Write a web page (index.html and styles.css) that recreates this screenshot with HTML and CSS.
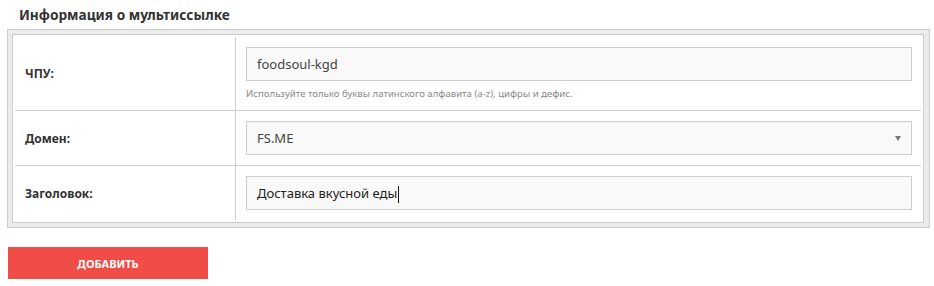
FILE: index.html
```html
<!DOCTYPE html>
<html lang="ru">
<head>
<meta charset="utf-8">
<title>Информация о мультиссылке</title>
<link rel="stylesheet" href="styles.css">
</head>
<body>
<h2 class="title">Информация о мультиссылке</h2>
<div class="panel">
  <div class="panel-inner">
    <div class="form-table">
      <div class="row first">
        <div class="label">ЧПУ:</div>
        <div class="field">
          <div class="input">foodsoul-kgd</div>
          <div class="hint">Используйте только буквы латинского алфавита (a-z), цифры и дефис.</div>
        </div>
      </div>
      <div class="row">
        <div class="label">Домен:</div>
        <div class="field">
          <div class="input select">FS.ME<span class="arrow"></span></div>
        </div>
      </div>
      <div class="row last">
        <div class="label">Заголовок:</div>
        <div class="field">
          <div class="input dark">Доставка вкусной еды<span class="caret"></span></div>
        </div>
      </div>
    </div>
  </div>
</div>
<button class="btn">ДОБАВИТЬ</button>
</body>
</html>
```
FILE: styles.css
```css
html, body {
  margin: 0;
  padding: 0;
  background: #fff;
}
body {
  padding: 0 5px 0 7px;
  font-family: "Noto Sans", "Open Sans", sans-serif;
  color: #333;
}
.title {
  margin: 0 0 4px 12px;
  padding-top: 5px;
  font-size: 13.7px;
  line-height: 20px;
  font-weight: 700;
  color: #333;
}
.panel {
  width: 912px;
  border: 1px solid #cdcdcd;
  background: #ebebeb;
  padding: 4px 5px 4px 4px;
}
.panel-inner {
  border: 1px solid #cdcdcd;
  background: #fff;
  padding: 2px;
}
.form-table {
  display: flex;
  flex-direction: column;
}
.row {
  display: grid;
  grid-template-columns: 221px 1fr;
  border-bottom: 1px solid #cdcdcd;
}
.row.last {
  border-bottom: none;
}
.label {
  border-right: 1px solid #cdcdcd;
  display: flex;
  align-items: center;
  padding-left: 10px;
  font-size: 12px;
  font-weight: 700;
  color: #333;
}
.field {
  padding: 10px 9px 10px 10px;
}
.row.first .field {
  padding-bottom: 9px;
}
.input {
  position: relative;
  height: 32px;
  border: 1px solid #cdcdcd;
  background: #f9f9f9;
  padding-left: 10px;
  font-size: 13px;
  line-height: 32px;
  color: #444;
}
.input.dark {
  color: #222;
}
.hint {
  margin-top: 6px;
  font-size: 9.6px;
  line-height: 14px;
  color: #8a8a8a;
}
.arrow {
  position: absolute;
  right: 10px;
  top: 14px;
  width: 0;
  height: 0;
  border-left: 3.5px solid transparent;
  border-right: 3.5px solid transparent;
  border-top: 5px solid #777;
}
.caret {
  display: inline-block;
  width: 1px;
  height: 17px;
  background: #111;
  vertical-align: middle;
  margin-left: 1px;
}
.btn {
  display: block;
  margin: 19px 0 0 1px;
  width: 200px;
  height: 32px;
  border: none;
  background: #f04d48;
  color: #fff;
  font-family: "Noto Sans", "Open Sans", sans-serif;
  font-size: 11px;
  font-weight: 700;
  cursor: pointer;
  padding: 0;
}
```
